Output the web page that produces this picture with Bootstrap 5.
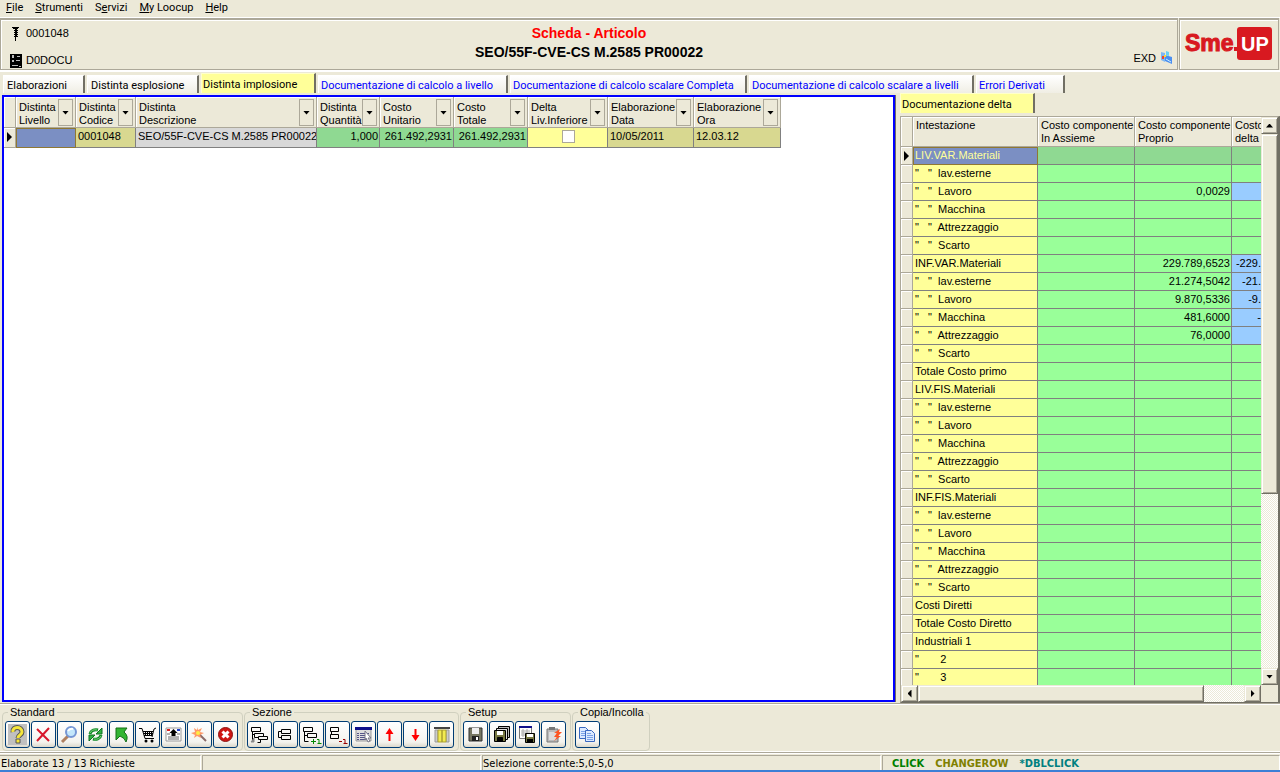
<!DOCTYPE html>
<html lang="it">
<head>
<meta charset="utf-8">
<meta name="viewport" content="width=device-width, initial-scale=1">
<title>Scheda - Articolo</title>
<link rel="stylesheet" href="https://cdn.jsdelivr.net/npm/bootstrap@5.3.0/dist/css/bootstrap.min.css">
<style>
:root{--face:#ece9d8;--shade:#aca899;--dark:#716f64}
body{font:11px/13px "Liberation Sans",Arial,sans-serif;color:#000;background:var(--face)}
.wide{font-family:"DejaVu Sans Condensed","DejaVu Sans",sans-serif}
.app{min-height:100vh}
/* menu */
.menubar{height:17px;padding-left:6px;gap:12px}
.menubar a{color:#000;text-decoration:none;line-height:15px}
.menubar,.tab-b{font-family:Roboto,"Liberation Sans",sans-serif}
/* header */
.head{height:55px;border-top:1px solid #fff;border-bottom:2px solid #fff;background:var(--face);gap:1px;padding-right:1px}
.sunk{border:1px solid var(--shade);border-top-width:2px;box-shadow:inset 1px 1px #fff}
.title{font-size:14px;line-height:19px;font-weight:700}
.info{gap:13px;padding:7px 0 0 9px}
.info div{gap:4px}
.brand{width:100px}
.cap{color:#f00}
/* tabs */
.tabs{height:21px;padding:0 3px;gap:2px}
.tab-b{border:0;border-top:1px solid #fff;border-left:1px solid #fff;border-right:2px solid var(--dark);height:18px;padding:2px 0 0 2px;text-align:left;white-space:nowrap;color:#00f;background:linear-gradient(#fff,#f0eee4)}
.tab-b.blk{color:#000;padding-left:3px}
.tab-b.sel{background:#ff9;color:#000;height:20px;border-top-color:#ffc;border-left-color:#ffc;padding-left:1px}
.w-a{width:82px}.w-b{width:112px}.w-c{width:115px}.w-d{width:190px}.w-e{width:237px}.w-f{width:225px}.w-g{width:89px}.w-h{width:135px}
/* panes */
.left{border:2px solid #00f;background:#fff;margin:2px 0 1px 2px;min-width:0;overflow:hidden;box-shadow:1px 0 var(--dark)}
.right{width:380px;margin-left:5px}
.box{border:1px solid var(--shade);border-right:2px solid var(--dark);border-bottom-color:var(--dark);margin-top:3px}
table{border-collapse:separate;border-spacing:0;table-layout:fixed}
.grid-l{width:777px}
.grid-r{width:360px}
.grid-l th,.grid-r th{font-weight:400;vertical-align:top;background:var(--face);border-right:1px solid var(--shade);border-bottom:1px solid var(--shade);box-shadow:inset 1px 1px #fff;padding:4px 0 0 3px;height:31px;white-space:nowrap;overflow:hidden}
.grid-r th{height:30px;padding-top:2px}
.grid-l td,.grid-r td{height:18px;padding:0 1px 0 2px;border-right:1px solid #808080;border-bottom:1px solid #808080;white-space:pre;line-height:16px;overflow:hidden;vertical-align:top}
.grid-r td{background:#9f9}
.grid-r th:last-child,.grid-r td:last-child{border-right:0;padding-right:0}
.grid-r td.nm{background:#ff9}
.grid-r tr.cur td{background:#8fd992}
.grid-l td.blu,.grid-r tr.cur td.nm{background:#7b8fc3;color:#ff9;outline:1px solid #8f7833;outline-offset:-1px}
.grid-l td.rh,.grid-r td.rh,.grid-r tr.cur td.rh{background:var(--face);padding:0;box-shadow:inset 1px 1px #fff;border-color:var(--shade);text-align:center}
.grid-r td.neg{background:#9cf}
.gn{background:#8fd992}.kh{background:#d8d890}.gy{background:#d8d8d8}.yl{background:#ff9}
.ptr{width:5px;height:10px;display:inline-block;background:#000;clip-path:polygon(0 0,100% 50%,0 100%);vertical-align:middle}
.dd{width:15px;height:27px;border:1px solid var(--shade);background:var(--face);padding:0;float:right;margin:-2px 2px 0 -20px;position:relative}
.tri{display:block;width:7px;height:4px;background:#000;clip-path:polygon(0 0,100% 0,50% 100%);margin:auto}
.tri.up{clip-path:polygon(0 100%,100% 100%,50% 0)}
.tri.lf,.tri.rt{width:4px;height:8px;clip-path:polygon(100% 0,100% 100%,0 50%)}
.tri.rt{clip-path:polygon(0 0,0 100%,100% 50%)}
.chk{appearance:none;width:13px;height:13px;border:1px solid var(--shade);background:#fff;margin:2px 0 0;border-radius:0;display:inline-block}
.view{height:0;min-height:100%;overflow:hidden}
.trk{background:repeating-conic-gradient(#fff 0 25%,#ece9d8 0 50%) 0 0/2px 2px}
.sb{border:1px solid var(--face);border-right-color:var(--dark);border-bottom-color:var(--dark);background:var(--face);box-shadow:inset 1px 1px #fff,inset -1px -1px var(--shade);padding:0;width:17px;height:17px;flex:none}
.vs{width:17px}.vs .thumb{width:100%;height:auto;flex:359}
.vs .rest{flex:175}
.hs{height:17px}.hs .thumb{width:auto;flex:286}
.hs .rest{flex:40}
/* toolbar */
.tools{height:49px;border-top:1px solid var(--shade);border-bottom:1px solid #fff;box-shadow:inset 0 1px #fff;padding:2px 0 0 2px;gap:1px}
.tools fieldset{border:1px solid #d0d0bf;border-radius:4px;padding:2px 2px 1px;white-space:nowrap;height:45px;min-width:0}
.tools legend{float:none;width:auto;font-size:11px;line-height:13px;padding:0 2px;margin:0 0 0 3px}
.row-b{gap:1px;display:flex}
.tool{width:25px;height:27px;border:1px solid #003c74;border-radius:3px;background:linear-gradient(#fff,#f4f3ee 80%,#dcd8cb);padding:0;display:flex;align-items:center;justify-content:center}
.tool svg{width:19px;height:19px;overflow:visible}
.g1{width:241px}.g2{width:215px}.g3{width:111px}.g4{width:78px}
/* status */
.status{height:20px;border-top:1px solid var(--shade);border-bottom:2px solid #3c7fd6;gap:1px;padding-top:2px;box-shadow:inset 0 1px #fff}
.status>div{border-left:1px solid var(--shade);border-top:1px solid var(--shade);border-right:1px solid #fff;padding-top:2px;white-space:nowrap;line-height:12px}
.status>div:first-child{border-left:0;padding-left:1px}
.s1{width:201px}.s2{width:279px}.s4{width:398px;gap:11px;padding-left:9px}
.ev1{color:#008000}.ev2{color:#808000}.ev3{color:#008080}
</style>
</head>
<body>
<div class="app d-flex flex-column">
<nav class="menubar d-flex">
<a href="#"><u>F</u>ile</a><a href="#"><u>S</u>trumenti</a><a href="#">S<u>e</u>rvizi</a><a href="#"><u>M</u>y Loocup</a><a href="#"><u>H</u>elp</a>
</nav>
<header class="head d-flex">
<div class="sunk flex-grow-1 d-flex position-relative">
<div class="info d-flex flex-column">
<div class="d-flex"><svg width="12" height="14" viewBox="0 0 12 14"><path d="M2 0h7v1H8v1H7v1h1v1H7v1h1v1H7v1h1v1H7v1h1v1H6v4H5v-4H4V9h1V8H4V7h1V6H4V5h1V4H4V3h1V2H3V1H2z"/></svg><span>0001048</span></div>
<div class="d-flex"><svg width="12" height="14" viewBox="0 0 12 14"><path d="M0 0h12v14H0z"/><path d="M2 1h2v3H2zm5 1h3v1H7zM2 6h2v2H2zm4 0h4v1H6zM2 11h6v1H2zm7 1h2v1H9z" fill="#bbb"/></svg><span>D0DOCU</span></div>
</div>
<div class="title position-absolute top-0 start-0 end-0 text-center pt-1 pe-none"><div class="cap">Scheda - Articolo</div><div>SEO/55F-CVE-CS M.2585 PR00022</div></div>
<div class="ms-auto d-flex align-items-end gap-1 pe-1"><span class="pb-1">EXD</span><svg class="mb-1" width="13" height="14" viewBox="0 0 13 14"><path d="M1 1l4 1v9l-4-2z" fill="#7db8f5"/><path d="M5 4l7 2v7L5 10z" fill="#4b8ff0"/><path d="M6 0l3 1v4L6 4z" fill="#67d0f4"/><path d="M2 5h2v3H2z" fill="#e43"/><path d="M4 4h2v2H4z" fill="#fd3"/><path d="M6 8l5 3" stroke="#cef"/></svg></div>
</div>
<div class="sunk brand flex-shrink-0"><svg width="98" height="48" viewBox="0 0 98 48" font-family="Liberation Sans" font-weight="700"><rect x="57" y="7" width="35" height="33" rx="3" fill="#d81920"/><text x="5" y="31" font-size="23" fill="#d81920" stroke="#d81920">Sme</text><rect x="54" y="27" width="4" height="4" fill="#d81920"/><text x="61" y="31" font-size="20" fill="#fff">UP</text></svg></div>
</header>
<div class="tabs d-flex align-items-end" role="tablist">
<button class="tab-b blk w-a" role="tab">Elaborazioni</button><button class="tab-b blk w-b" role="tab">Distinta esplosione</button><button class="tab-b sel w-c" role="tab">Distinta implosione</button><button class="tab-b w-d" role="tab">Documentazione di calcolo a livello</button><button class="tab-b w-e" role="tab">Documentazione di calcolo scalare Completa</button><button class="tab-b w-f" role="tab">Documentazione di calcolo scalare a livelli</button><button class="tab-b w-g" role="tab">Errori Derivati</button>
</div>
<main class="d-flex flex-grow-1">
<section class="left flex-grow-1">
<table class="grid-l"><colgroup id="lc"></colgroup>
<thead><tr id="lh"></tr></thead>
<tbody><tr><td class="rh"><span class="ptr"></span></td><td class="blu"></td><td class="kh">0001048</td><td class="gy">SEO/55F-CVE-CS M.2585 PR00022</td><td class="gn text-end">1,000</td><td class="gn text-end">261.492,2931</td><td class="gn text-end">261.492,2931</td><td class="yl text-center"><input type="checkbox" class="chk" aria-label="Delta Liv.Inferiore"></td><td class="kh">10/05/2011</td><td class="kh">12.03.12</td></tr></tbody>
</table>
</section>
<section class="right d-flex flex-column flex-shrink-0">
<button class="tab-b sel w-h" role="tab">Documentazione delta</button>
<div class="box flex-grow-1 d-flex flex-column">
<div class="d-flex flex-grow-1">
<div class="flex-grow-1"><div class="view">
<table class="grid-r"><colgroup><col style="width:12px"><col style="width:125px"><col style="width:97px"><col style="width:97px"><col></colgroup>
<thead><tr><th></th><th>Intestazione</th><th>Costo componente<br>In Assieme</th><th>Costo componente<br>Proprio</th><th>Costo<br>delta</th></tr></thead>
<tbody id="rb"></tbody></table>
</div></div>
<div class="vs trk d-flex flex-column"><button class="sb" aria-label="Su"><i class="tri up"></i></button><div class="sb thumb"></div><div class="rest"></div><button class="sb" aria-label="Giù"><i class="tri"></i></button></div>
</div>
<div class="d-flex"><div class="hs trk d-flex flex-grow-1"><button class="sb" aria-label="Sinistra"><i class="tri lf"></i></button><div class="sb thumb"></div><div class="rest"></div><button class="sb" aria-label="Destra"><i class="tri rt"></i></button></div><div class="vs"></div></div>
</div>
</section>
</main>
<div class="tools d-flex" role="toolbar">
<fieldset class="g1"><legend>Standard</legend><div class="row-b">
<button class="tool" aria-label="Aiuto"><svg viewBox="0 0 19 19"><path d="M0-1h19v21H0z" fill="#c0c0c0"/><path d="M5 7c-1-6 9-6 9 0 0 3-4 3-4 6" fill="none" stroke="#555" stroke-width="5"/><path d="M5 7c-1-6 9-6 9 0 0 3-4 3-4 6" fill="none" stroke="#f5e63c" stroke-width="3"/><path d="M8 14h4v4H8z" fill="#f5e63c" stroke="#555"/></svg></button>
<button class="tool" aria-label="Elimina"><svg viewBox="0 0 19 19"><path d="M3 4l12 12M15 3L3 16" stroke="#d8182c" stroke-width="2" fill="none"/></svg></button>
<button class="tool" aria-label="Cerca"><svg viewBox="0 0 19 19"><path d="M8 11l-6 6" stroke="#b08060" stroke-width="3"/><circle cx="11" cy="7" r="5" fill="#c4e7fb" stroke="#7596d4" stroke-width="2"/><path d="M8 6q2-3 5-2" stroke="#fff" stroke-width="2" fill="none"/></svg></button>
<button class="tool" aria-label="Aggiorna"><svg viewBox="0 0 19 19" fill="none"><path d="M4 9a6 5 0 0 1 8-4M15 10a6 5 0 0 1-8 4" stroke="#128a28" stroke-width="3"/><path d="M4 8a6 5 0 0 1 7-3M15 11a6 5 0 0 1-7 3" stroke="#7ad77a"/><path d="M16 3v6h-6zM3 16v-6h6z" fill="#2fb340" stroke="#107020"/></svg></button>
<button class="tool" aria-label="Indietro"><svg viewBox="0 0 19 19"><path d="M4 3h11l-3 4q5 4 2 10-1-4-6-6l-4 4z" fill="#33b532" stroke="#146f17"/></svg></button>
<button class="tool" aria-label="Carrello"><svg viewBox="0 0 19 19"><path d="M1 3.500h3l3 10h9M5 6.500h10M6 8.500h9M6 10.500h8M7.500 6v5m2-5v5m2-5v5m2-5v5M18 3l-2 1-2 8" stroke="#000" fill="none"/><circle cx="8" cy="16" r="1.500"/><circle cx="14" cy="16" r="1.500"/></svg></button>
<button class="tool" aria-label="Scheda"><svg viewBox="0 0 19 19"><path d="M2 3h15v13H2z" fill="#fff" stroke="#999"/><path d="M3 4h3v2H3z" fill="#d22"/><path d="M13 4h3v2h-3z" fill="#24c"/><path d="M9.500 4l4 4h-2v3h-4V8h-2z"/><path d="M3 9h3m7 0h3M4 12h11M4 14h11" stroke="#666"/></svg></button>
<button class="tool" aria-label="Procedura guidata"><svg viewBox="0 0 19 19"><path d="M9 9l7 7" stroke="#8a6a68" stroke-width="2"/><path d="M7 2l1 3 4-2-2 4 4 1-4 2 1 3-4-2-3 2 1-3-4-2 4-1-1-4 3 2z" fill="#f96"/><circle cx="8" cy="8" r="2" fill="#fe4"/></svg></button>
<button class="tool" aria-label="Chiudi"><svg viewBox="0 0 19 19"><circle cx="9.500" cy="9.500" r="7" fill="#cf1714" stroke="#8e1411"/><path d="M6.500 6.500l6 6M12.500 6.500l-6 6" stroke="#fff" stroke-width="3"/></svg></button>
</div></fieldset>
<fieldset class="g2"><legend>Sezione</legend><div class="row-b">
<button class="tool" aria-label="Albero"><svg viewBox="0 0 19 19" fill="none" stroke="#000"><path d="M1.500 2.500h9v4h-9zM4.500 8.500h9v3M4.500 8.500v4h4M2.500 6.500v9M2.500 9.500h2M8.500 11.500h9v3h-9zM10.500 14.500v3h-3"/><path d="M1 17l3-4v4z" fill="#888" stroke="#888"/></svg></button>
<button class="tool" aria-label="Comprimi"><svg viewBox="0 0 19 19" fill="none" stroke="#000"><path d="M5.500 4.500h9v4h-9zM5.500 10.500h9v4h-9zM5 6.500H2.500v6H5"/></svg></button>
<button class="tool" aria-label="Espandi livello"><svg viewBox="0 0 19 19" fill="none" stroke="#000"><path d="M1.500 2.500h9v4h-9zM5.500 8.500h9v4h-9zM2.500 6.500v10h4M2.500 10.500h3"/><path d="M9 16.500h5M11.500 14v5M15 14.500h2V19M15.500 18.500h4" stroke="#080"/></svg></button>
<button class="tool" aria-label="Riduci livello"><svg viewBox="0 0 19 19" fill="none" stroke="#000"><path d="M2.500 2.500h8v4h-8zM2.500 9.500h8v4h-8zM3.500 6.500v3"/><path d="M11 16.500h3M15 14.500h2V19M15.500 18.500h4" stroke="#900"/></svg></button>
<button class="tool" aria-label="Seleziona"><svg viewBox="0 0 19 19"><path d="M2 3h15v13H2z" fill="#ddd" stroke="#999"/><path d="M1 2h17v3H1z" fill="#10108a"/><path d="M3 8.500h2m1 0h9M3 10.500h2m1 0h9M3 12.500h2m1 0h9M3 14.500h2m1 0h9" stroke="#558"/><path d="M11 6l6 7h-3l2 3-2 1-2-4-1 2z" fill="#fff" stroke="#778"/></svg></button>
<button class="tool" aria-label="Su"><svg viewBox="0 0 19 19"><path d="M9.500 3l4 6h-3v7h-2V9h-3z" fill="red"/></svg></button>
<button class="tool" aria-label="Giù"><svg viewBox="0 0 19 19"><path d="M9.500 16l4-6h-3V4h-2v6h-3z" fill="red"/></svg></button>
<button class="tool" aria-label="Colonne"><svg viewBox="0 0 19 19"><path d="M2 2h16v2H2z" fill="#444"/><path d="M3 5h3v12H3zm11 0h3v12h-3z" fill="#ccc" stroke="#999"/><path d="M6 5h4v12H6zm4 0h4v12h-4z" fill="#f2eb50" stroke="#a99e30"/></svg></button>
</div></fieldset>
<fieldset class="g3"><legend>Setup</legend><div class="row-b">
<button class="tool" aria-label="Salva"><svg viewBox="0 0 19 19"><path d="M3 3h13v13H3z" fill="#777762" stroke="#333"/><path d="M6 3h7v6H6z" fill="#eee"/><path d="M6 11h7v5H6z" fill="#222"/><path d="M10 12h2v3h-2z" fill="#fff"/></svg></button>
<button class="tool" aria-label="Salva tutto"><svg viewBox="0 0 19 19" stroke="#000"><path d="M6.500 1.500h11v11h-11z" fill="#bbb"/><path d="M4.500 3.500h11v11h-11z" fill="#ddd"/><path d="M2.500 5.500h11v11h-11z" fill="#777742"/><path d="M5 6h6v4H5z" fill="#fff" stroke="none"/><path d="M5.500 12.500h5v4h-5z"/></svg></button>
<button class="tool" aria-label="Salva tabella"><svg viewBox="0 0 19 19"><path d="M1.500 1.500h12v12h-12z" fill="#fff" stroke="#777"/><path d="M1 1h13v2H1z" fill="#10108a"/><path d="M3 6h9M3 8h9M3 10h5M5 4v8m4-8v5" stroke="#aaa"/><path d="M7.500 8.500h9v9h-9z" fill="#777742" stroke="#000"/><path d="M9 9h6v3H9z" fill="#fff"/><path d="M9 14h6v3H9z"/></svg></button>
<button class="tool" aria-label="Esegui"><svg viewBox="0 0 19 19"><path d="M3 4h11v13H3z" fill="#bbb" stroke="#777"/><path d="M5 2h6v3H5z" fill="#777"/><path d="M5 7h7v8H5z" fill="#ddd"/><path d="M16 4l-6 4h3l-3 4h3l-3 4 7-5h-3l4-4h-3z" fill="#f52"/></svg></button>
</div></fieldset>
<fieldset class="g4"><legend>Copia/Incolla</legend><div class="row-b">
<button class="tool" aria-label="Copia"><svg viewBox="0 0 19 19" fill="#dceaff" stroke="#3a68c0"><path d="M1.500 2.500h6l3 3v8h-9z"/><path d="M7.500 5.500h6l3 3v8h-9z"/><path d="M3 6.500h4M3 8.500h4M3 10.500h4M9 8.500h4M9 10.500h6M9 12.500h6M9 14.500h6" stroke="#7ba2e6"/></svg></button>
</div></fieldset>
</div>
<footer class="status wide d-flex">
<div class="s1">Elaborate 13 / 13 Richieste</div><div class="s2"></div><div class="flex-grow-1">Selezione corrente:5,0-5,0</div>
<div class="s4 d-flex fw-bold"><span class="ev1">CLICK</span><span class="ev2">CHANGEROW</span><span class="ev3">*DBLCLICK</span></div>
</footer>
</div>
<script src="https://cdn.jsdelivr.net/npm/bootstrap@5.3.0/dist/js/bootstrap.bundle.min.js"></script>
<script>
const cols=[["",12],["Distinta<br>Livello",60],["Distinta<br>Codice",60],["Distinta<br>Descrizione",181],["Distinta<br>Quantità",63],["Costo<br>Unitario",74],["Costo<br>Totale",74],["Delta<br>Liv.Inferiore",80],["Elaborazione<br>Data",86],["Elaborazione<br>Ora",87]];
lc.innerHTML=cols.map(c=>`<col style="width:${c[1]}px">`).join("");
lh.innerHTML=cols.map(c=>`<th>${c[0]?'<button class="dd" aria-label="Filtro"><i class="tri"></i></button>':''}${c[0]}</th>`).join("");
const sub=["lav.esterne","Lavoro","Macchina","Attrezzaggio","Scarto"].map(s=>'"   "  '+s);
const names=["LIV.VAR.Materiali",...sub,"INF.VAR.Materiali",...sub,"Totale Costo primo","LIV.FIS.Materiali",...sub,"INF.FIS.Materiali",...sub,"Costi Diretti","Totale Costo Diretto","Industriali 1",'"       2','"       3'];
const vals={2:["0,0029",""],6:["229.789,6523","-229."],7:["21.274,5042","-21."],8:["9.870,5336","-9."],9:["481,6000","-"],10:["76,0000",""]};
rb.innerHTML=names.map((n,i)=>{const v=vals[i]||["",""];return `<tr class="${i?'':'cur'}"><td class="rh">${i?'':'<span class="ptr"></span>'}</td><td class="nm">${n}</td><td></td><td class="text-end">${v[0]}</td><td class="text-end ${vals[i]?'neg':''}">${v[1]}</td></tr>`}).join("");
</script>
</body>
</html>
